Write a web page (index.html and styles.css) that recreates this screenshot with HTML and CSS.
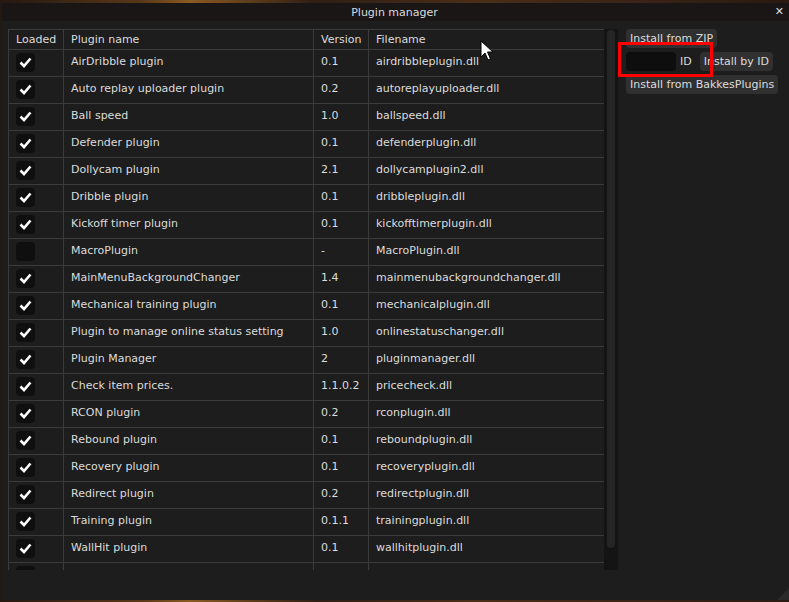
FILE: index.html
```html
<!DOCTYPE html>
<html lang="en">
<head>
  <meta charset="UTF-8" />
  <title>Plugin manager</title>
  <link rel="stylesheet" href="styles.css">
</head>
<body>
  <div class="window">
    <div class="titlebar">
      <span class="title">Plugin manager</span>
      <span class="close">&#x2715;</span>
    </div>
    <div class="content">
      <div class="table-area">
        <div class="table-clip">
          <table class="plugins">
            <thead>
              <tr>
                <th class="col-loaded">Loaded</th>
                <th class="col-name">Plugin name</th>
                <th class="col-version">Version</th>
                <th class="col-file">Filename</th>
              </tr>
            </thead>
            <tbody id="pluginRows"></tbody>
          </table>
        </div>
        <div class="scrollbar"><div class="grab"></div></div>
      </div>

      <div class="side">
        <button class="btn">Install from ZIP</button>
        <div class="id-row">
          <div class="input"></div>
          <span class="label">ID</span>
          <button class="btn">Install by ID</button>
        </div>
        <button class="btn">Install from BakkesPlugins</button>
        <div class="highlight"></div>
      </div>
    </div>
    <div class="grip"></div>
  </div>

  <svg class="cursor" width="14" height="22" viewBox="0 0 14 22">
    <path d="M1 1 L1 17 L5 13 L8 20 L10.5 19 L7.5 12 L13 12 Z" fill="#fff" stroke="#000" stroke-width="1"/>
  </svg>

  <script>
    const plugins = [
      { loaded: true, name: "AirDribble plugin", version: "0.1", file: "airdribbleplugin.dll" },
      { loaded: true, name: "Auto replay uploader plugin", version: "0.2", file: "autoreplayuploader.dll" },
      { loaded: true, name: "Ball speed", version: "1.0", file: "ballspeed.dll" },
      { loaded: true, name: "Defender plugin", version: "0.1", file: "defenderplugin.dll" },
      { loaded: true, name: "Dollycam plugin", version: "2.1", file: "dollycamplugin2.dll" },
      { loaded: true, name: "Dribble plugin", version: "0.1", file: "dribbleplugin.dll" },
      { loaded: true, name: "Kickoff timer plugin", version: "0.1", file: "kickofftimerplugin.dll" },
      { loaded: false, name: "MacroPlugin", version: "-", file: "MacroPlugin.dll" },
      { loaded: true, name: "MainMenuBackgroundChanger", version: "1.4", file: "mainmenubackgroundchanger.dll" },
      { loaded: true, name: "Mechanical training plugin", version: "0.1", file: "mechanicalplugin.dll" },
      { loaded: true, name: "Plugin to manage online status setting", version: "1.0", file: "onlinestatuschanger.dll" },
      { loaded: true, name: "Plugin Manager", version: "2", file: "pluginmanager.dll" },
      { loaded: true, name: "Check item prices.", version: "1.1.0.2", file: "pricecheck.dll" },
      { loaded: true, name: "RCON plugin", version: "0.2", file: "rconplugin.dll" },
      { loaded: true, name: "Rebound plugin", version: "0.1", file: "reboundplugin.dll" },
      { loaded: true, name: "Recovery plugin", version: "0.1", file: "recoveryplugin.dll" },
      { loaded: true, name: "Redirect plugin", version: "0.2", file: "redirectplugin.dll" },
      { loaded: true, name: "Training plugin", version: "0.1.1", file: "trainingplugin.dll" },
      { loaded: true, name: "WallHit plugin", version: "0.1", file: "wallhitplugin.dll" },
      { loaded: true, name: "Workshop plugin", version: "0.1", file: "workshopplugin.dll" }
    ];

    const check = `<svg width="19" height="19" viewBox="0 0 19 19"><path d="M4.5 9.5 L8 13 L14.5 5.5" fill="none" stroke="#fff" stroke-width="2.6"/></svg>`;

    const rows = document.getElementById("pluginRows");
    plugins.forEach(p => {
      const tr = document.createElement("tr");
      tr.innerHTML = `
        <td class="col-loaded"><div class="checkbox">${p.loaded ? check : ""}</div></td>
        <td class="col-name"><span class="cell-text">${p.name}</span></td>
        <td class="col-version"><span class="cell-text">${p.version}</span></td>
        <td class="col-file"><span class="cell-text">${p.file}</span></td>
      `;
      rows.appendChild(tr);
    });
  </script>
</body>
</html>
```

FILE: styles.css
```css
:root {
  --text: #dcdcdc;
  --line: #3b3b3b;
  --body: #1d1d1d;
  --title: #191615;
  --button: #303030;
}

body {
  margin: 0;
  width: 789px;
  height: 602px;
  overflow: hidden;
  background: linear-gradient(90deg, #241812 0%, #5a3818 18%, #8a5a22 24%, #2e1e14 40%, #4a2e18 60%, #2a1a12 100%);
  font-family: 'DejaVu Sans', sans-serif;
  font-size: 11px;
  color: var(--text);
}

.window {
  margin: 3px 0 0 2px;
  width: 787px;
  height: 597px;
  background: var(--body);
  position: relative;
}

.titlebar {
  height: 18px;
  background: var(--title);
  display: flex;
  align-items: center;
  justify-content: center;
  position: relative;
}

.title {
  font-size: 11px;
  margin-left: -2px;
}

.close {
  position: absolute;
  right: 5px;
  top: 2px;
  font-size: 11px;
}

.content {
  display: flex;
  padding: 8px 0 0 6px;
  position: relative;
}

.table-area {
  display: flex;
  height: 541px;
}

.table-clip {
  width: 596px;
  height: 541px;
  overflow: hidden;
}

.plugins {
  border-collapse: collapse;
  width: 596px;
  table-layout: fixed;
  border-left: 1px solid var(--line);
}

.plugins th,
.plugins td {
  text-align: left;
  font-weight: normal;
  vertical-align: top;
  padding: 0 7px;
  border-right: 1px solid var(--line);
  border-bottom: 1px solid var(--line);
  white-space: nowrap;
  overflow: hidden;
}

.plugins th {
  height: 19px;
  line-height: 19px;
  border-top: 1px solid var(--line);
}

.plugins td {
  padding-top: 3px;
  line-height: 15px;
  box-sizing: border-box;
  height: 27px;
}

.cell-text {
  display: block;
  margin-top: 1px;
}

.plugins .col-loaded { width: 40px; }
.plugins .col-name { width: 235px; }
.plugins .col-version { width: 40px; }
.plugins .col-file { border-right: none; }

.checkbox {
  width: 19px;
  height: 19px;
  background: #0f0f0f;
  border-radius: 4px;
}

.checkbox svg {
  display: block;
}

.scrollbar {
  width: 14px;
  height: 541px;
  background: #141414;
  padding: 1px 3px 0;
  box-sizing: border-box;
}

.grab {
  height: 518px;
  background: #252525;
  border-radius: 4px;
}

.side {
  display: flex;
  flex-direction: column;
  align-items: flex-start;
  gap: 4px;
  margin-left: 8px;
  position: relative;
}

.btn {
  background: var(--button);
  color: var(--text);
  border: none;
  border-radius: 4px;
  font-family: inherit;
  font-size: 11px;
  height: 19px;
  padding: 0 4px;
}

.id-row {
  display: flex;
  align-items: center;
  gap: 4px;
}

.input {
  width: 50px;
  height: 19px;
  background: #0e0e0e;
  border-radius: 4px;
}

.label {
  margin: 0 4px 0 0;
}

.highlight {
  position: absolute;
  left: -8px;
  top: 13px;
  width: 89px;
  height: 29px;
  border: 3px solid #f00;
}

.grip {
  position: absolute;
  right: 0;
  bottom: 0;
  width: 0;
  height: 0;
  border-left: 12px solid transparent;
  border-bottom: 12px solid #2a2a2a;
}

.cursor {
  position: absolute;
  left: 480px;
  top: 40px;
}
```
